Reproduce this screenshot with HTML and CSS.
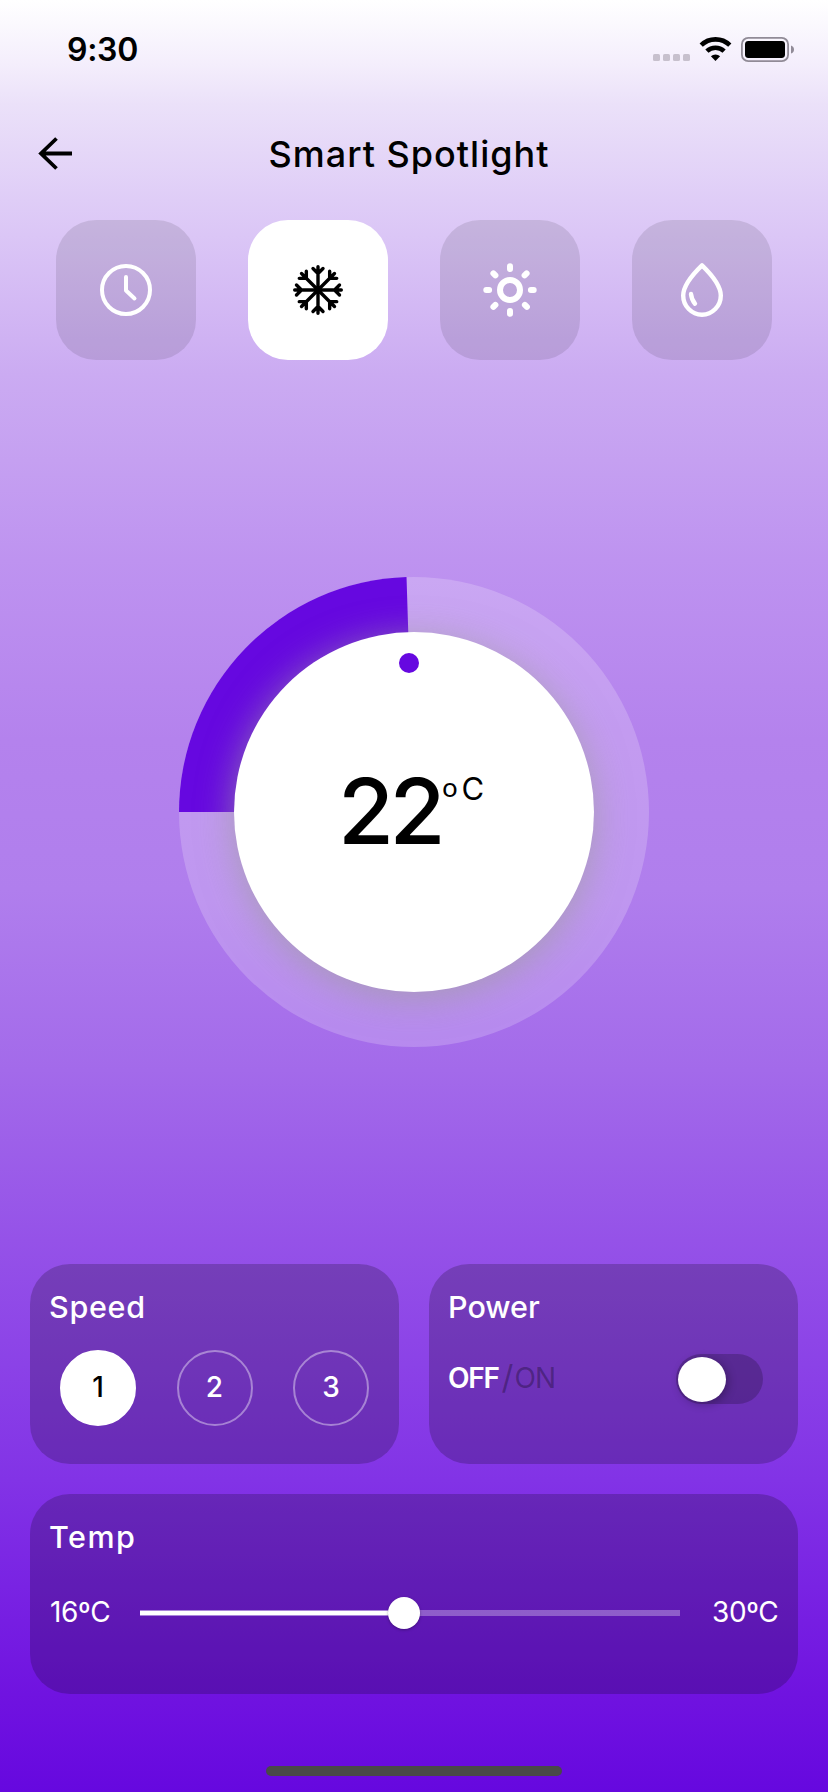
FILE: index.html
```html
<!DOCTYPE html>
<html lang="en">
<head>
<meta charset="utf-8">
<title>Smart Spotlight</title>
<link rel="stylesheet" href="styles.css">
</head>
<body>
<main class="screen">
  <div class="status">
    <span class="clock">9:30</span>
    <svg class="status-icons" width="144" height="28" viewBox="0 0 144 28">
      <g fill="#c7c0cd"><rect x="3" y="18" width="7" height="7" rx="1.6"/><rect x="13" y="18" width="7" height="7" rx="1.6"/><rect x="23" y="18" width="7" height="7" rx="1.6"/><rect x="33" y="18" width="7" height="7" rx="1.6"/></g>
      <g fill="none" stroke="#000" stroke-width="4.6"><path d="M51.2 9.2a20.5 20.5 0 0 1 28.6 0"/><path d="M56.9 15.2a12.4 12.4 0 0 1 17.2 0"/></g>
      <path d="M65.5 25l-4.6-4.7a6.8 6.8 0 0 1 9.2 0z"/>
      <rect x="91.9" y="1.9" width="46.2" height="23.2" rx="6.3" fill="none" stroke="#918b97" stroke-width="1.8"/>
      <rect x="95" y="5" width="40" height="17" rx="3.4"/>
      <path d="M141 9.5q3 1 3 4t-3 4z" fill="#918b97"/>
    </svg>
  </div>
  <header class="header">
    <svg class="back" width="36" height="36" viewBox="0 0 36 36" fill="none" stroke="#000" stroke-width="3.8"><path d="M35 17.500H5M19.500 2.500L4 17.500l15.500 15"/></svg>
    <h1 class="title">Smart Spotlight</h1>
  </header>
  <nav class="modes">
    <div class="mode"><svg width="60" height="60" viewBox="0 0 60 60" fill="none" stroke="#fff" stroke-width="4"><circle cx="30" cy="30" r="24"/><path d="M30 17v13.500l8.500 8" stroke-linecap="round" stroke-linejoin="round"/></svg></div>
    <div class="mode mode-active"><svg width="60" height="60" viewBox="0 0 60 60" fill="none" stroke="#000" stroke-width="3.4" stroke-linecap="round">
      <defs><path id="arm" d="M30 30V6.700M25 8.500l5 5 5-5"/></defs>
      <circle cx="30" cy="30" r="4" fill="#000" stroke="none"/>
      <use href="#arm"/><use href="#arm" transform="rotate(45 30 30)"/><use href="#arm" transform="rotate(90 30 30)"/><use href="#arm" transform="rotate(135 30 30)"/><use href="#arm" transform="rotate(180 30 30)"/><use href="#arm" transform="rotate(225 30 30)"/><use href="#arm" transform="rotate(270 30 30)"/><use href="#arm" transform="rotate(315 30 30)"/>
    </svg></div>
    <div class="mode"><svg width="60" height="60" viewBox="0 0 60 60" fill="none" stroke="#fff" stroke-width="6" stroke-linecap="round"><circle cx="30" cy="30" r="10"/><path d="M30 6.300v2.800M30 50.900v2.800M6.300 30h2.800M50.900 30h2.800M13.400 13.400l2 2M44.900 44.900l2 2M46.600 13.400l-2 2M15.400 44.900l-2 2"/></svg></div>
    <div class="mode"><svg width="60" height="60" viewBox="0 0 60 60" fill="none" stroke="#fff" stroke-width="4.400" stroke-linecap="round" stroke-linejoin="round"><path d="M30 5.300C21 14 11.200 25.500 11.200 35.500a18.800 19.200 0 0 0 37.600 0C48.800 25.500 39 14 30 5.300z"/><path d="M19 34q.6 5.800 4 9.700"/></svg></div>
  </nav>
  <section class="dial">
    <svg class="arc" width="470" height="470" viewBox="0 0 470 470"><path d="M235 235H0A235 235 0 0 1 227.500.100z" fill="#6608e0"/></svg>
    <div class="knob">
      <span class="pointer"></span>
      <div class="reading"><span class="value">22</span><span class="deg">o</span><span class="unit">C</span></div>
    </div>
  </section>
  <section class="cards">
    <div class="card">
      <h2 class="label speed-label">Speed</h2>
      <div class="speeds"><span class="speed speed-on">1</span><span class="speed">2</span><span class="speed">3</span></div>
    </div>
    <div class="card">
      <h2 class="label power-label">Power</h2>
      <div class="power"><span class="state"><span class="off">OFF</span><span class="slash">/</span><span class="on">ON</span></span><span class="toggle"><span class="thumb"></span></span></div>
    </div>
    <div class="card card-wide">
      <h2 class="label temp-label">Temp</h2>
      <div class="range"><span class="min">16ºC</span><div class="track"><div class="fill"></div><span class="handle"></span></div><span class="max">30ºC</span></div>
    </div>
  </section>
  <div class="home"></div>
</main>
</body>
</html>
```

FILE: styles.css
```css
* { box-sizing: border-box; }
body { margin: 0; font-family: Inter, "Liberation Sans", sans-serif; }
h1, h2 { margin: 0; }
svg { display: block; }
.screen {
  width: 828px; height: 1792px; display: flex; flex-direction: column; overflow: hidden;
  background: linear-gradient(#fff 0, #f4eefc 64px, #ebe1f9 104px, #dfcdf7 200px, #cbabf2 375px, #be93f0 560px, #b482ed 740px, #b07eed 890px, #a36aea 1070px, #9552e8 1240px, #8233e6 1480px, #7013e0 1694px, #6608df 1792px);
}
.status { height: 99px; display: flex; align-items: center; justify-content: space-between; padding: 0 34px 0 67px; }
.clock { font-size: 32px; font-weight: 600; letter-spacing: -0.3px; }
.header { height: 109px; display: flex; align-items: center; padding-left: 37px; }
.title { width: 672px; text-align: center; font-size: 36px; line-height: 44px; font-weight: 500; letter-spacing: 1px; }
.modes { display: flex; gap: 52px; padding: 12px 56px 0; }
.mode { width: 140px; height: 140px; border-radius: 40px; background: rgba(0,0,0,.1); display: grid; place-items: center; }
.mode-active { background: #fff; }
.dial { width: 470px; height: 470px; margin: 217px auto 0; border-radius: 50%; background: rgba(255,255,255,.2); display: grid; place-items: center; }
.arc, .knob { grid-area: 1 / 1; }
.knob { width: 360px; height: 360px; border-radius: 50%; background: #fff; box-shadow: 0 6px 36px rgba(158,158,158,.7); display: flex; flex-direction: column; }
.pointer { width: 20px; height: 20px; border-radius: 50%; background: #6608e0; margin: 21px 0 0 165px; }
.reading { display: flex; margin: 83px 0 0 104px; line-height: 110px; }
.value { font-size: 91px; font-weight: 500; letter-spacing: -4.500px; }
.deg { font-family: Lato, sans-serif; font-size: 27px; font-weight: 400; line-height: 62px; margin-left: 1px; }
.unit { font-size: 31px; font-weight: 400; line-height: 66px; margin-left: 4px; }
.cards { display: grid; grid-template-columns: 369px 369px; gap: 30px; padding: 0 30px; margin-top: 217px; }
.card { height: 200px; border-radius: 40px; background: rgba(0,0,0,.2); color: #fff; padding-top: 23px; }
.card-wide { grid-column: 1 / 3; }
.label { margin-left: 19px; font-size: 30.500px; line-height: 40px; font-weight: 500; letter-spacing: 0.7px; }
.power-label { letter-spacing: 0; }
.temp-label { letter-spacing: 1.500px; }
.speeds { display: flex; justify-content: space-between; padding: 23px 30px 0; }
.speed { width: 76px; height: 76px; border: 2px solid rgba(255,255,255,.4); border-radius: 50%; text-align: center; font-size: 28px; font-weight: 500; line-height: 70px; }
.speed-on { background: #fff; border-color: #fff; color: #000; }
.power { display: flex; justify-content: space-between; padding: 27px 35px 0 20px; }
.state { display: flex; font-size: 28px; line-height: 48px; margin-left: -1px; }
.off { font-weight: 600; letter-spacing: -1.300px; }
.slash, .on { color: rgba(0,0,0,.3); }
.slash { font-size: 33px; margin: 0 1px 0 3px; line-height: 46px; }
.on { letter-spacing: -0.800px; }
.toggle { width: 87px; height: 50px; border-radius: 25px; background: rgba(0,0,0,.2); padding: 2.500px 2px; }
.thumb { display: block; width: 48px; height: 45px; border-radius: 50%; background: #fff; box-shadow: 2px 2px 10px rgba(0,0,0,.3); }
.range { display: flex; align-items: center; margin-top: 35px; padding-left: 20px; height: 42px; font-size: 28px; letter-spacing: -0.400px; }
.min, .max { flex: none; line-height: 38px; padding-bottom: 2px; }
.min { width: 90px; }
.max { margin-left: 32px; }
.track { flex: none; width: 540px; height: 6px; background: rgba(255,255,255,.3); display: flex; align-items: center; }
.fill { width: 248px; height: 6px; background: linear-gradient(#a985da 1px, #fff 1px 5px, #a985da 5px); }
.handle { width: 32px; height: 32px; border-radius: 50%; background: #fff; box-shadow: 0 1px 3px rgba(0,0,0,.3); flex: none; }
.home { width: 296px; height: 10px; border-radius: 5px; background: #494949; margin: 72px auto 0; }
```
